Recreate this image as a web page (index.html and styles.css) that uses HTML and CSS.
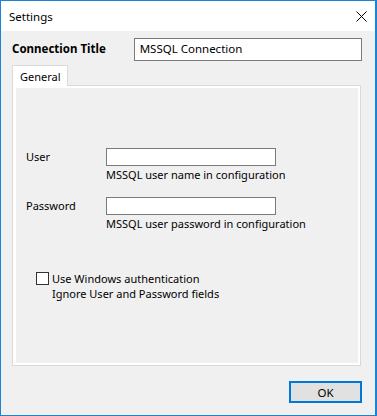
FILE: index.html
```html
<!DOCTYPE html>
<html>
<head>
<meta charset="utf-8">
<link rel="stylesheet" href="styles.css">
</head>
<body>
<div class="window">
  <div class="titlebar">
    <span class="title">Settings</span>
    <span class="close">
      <svg width="11" height="11" viewBox="0 0 11 11"><path d="M0.5 0.5 L10.5 10.5 M10.5 0.5 L0.5 10.5" stroke="#000" stroke-width="1" fill="none"/></svg>
    </span>
  </div>
  <div class="content">
    <div class="conn-row">
      <label class="conn-label">Connection Title</label>
      <div class="textbox conn-input">MSSQL Connection</div>
    </div>
    <div class="tabs">
      <div class="tab">General</div>
    </div>
    <div class="panel">
      <div class="page">
        <div class="fields">
          <div class="field">
            <span class="flabel">User</span>
            <div class="textbox finput"></div>
            <span class="hint">MSSQL user name in configuration</span>
          </div>
          <div class="field">
            <span class="flabel">Password</span>
            <div class="textbox finput"></div>
            <span class="hint">MSSQL user password in configuration</span>
          </div>
        </div>
        <div class="check">
          <span class="box"></span>
          <div class="check-text">
            <div>Use Windows authentication</div>
            <div>Ignore User and Password fields</div>
          </div>
        </div>
      </div>
    </div>
    <div class="footer">
      <button class="ok">OK</button>
    </div>
  </div>
</div>
</body>
</html>
```

FILE: styles.css
```css
* { box-sizing: border-box; }
html, body { margin: 0; padding: 0; }
body {
  font-family: "Noto Sans", "DejaVu Sans", sans-serif;
  font-size: 11px;
  line-height: 15px;
  color: #000;
  background: #fff;
}
.window {
  width: 377px;
  height: 416px;
  border: 1px solid #1883d7;
  border-right-width: 2px;
  display: flex;
  flex-direction: column;
  background: #f0f0f0;
}
.titlebar {
  height: 30px;
  background: #fff;
  display: flex;
  align-items: center;
  justify-content: space-between;
  padding-left: 8px;
  padding-right: 8px;
}
.title { font-size: 11.5px; }
.close { display: flex; width: 11px; height: 11px; }
.content {
  flex: 1;
  padding: 7px 13px 0 11px;
  display: flex;
  flex-direction: column;
}
.conn-row { display: flex; align-items: center; height: 23px; }
.conn-label { width: 122px; font-weight: bold; font-size: 11.5px; margin-top: -2px; }
.textbox {
  background: #fff;
  border: 1px solid #7a7a7a;
}
.conn-input {
  width: 229px;
  height: 23px;
  padding: 2px 5px;
  font-size: 11.5px;
}
.tabs { margin-top: 4px; display: flex; position: relative; z-index: 1; }
.tab {
  width: 56px;
  height: 21px;
  margin-bottom: -1px;
  background: #fff;
  border: 1px solid #d9d9d9;
  border-bottom: none;
  padding: 3px 0 0 7px;
}
.panel {
  width: 349px;
  height: 281px;
  background: #fff;
  border: 1px solid #d9d9d9;
  padding: 2px 2px 2px 3px;
}
.page {
  height: 100%;
  background: #f0f0f0;
  padding: 60px 10px 0 10px;
}
.fields { display: flex; flex-direction: column; gap: 15px; }
.field {
  display: grid;
  grid-template-columns: 80px 170px;
}
.flabel { grid-column: 1; grid-row: 1; padding-top: 1px; }
.finput { grid-column: 2; grid-row: 1; height: 18px; }
.hint { grid-column: 2; grid-row: 2; padding-top: 1px; white-space: nowrap; }
.check {
  margin-top: 40px;
  margin-left: 10px;
  display: flex;
  align-items: flex-start;
  gap: 3px;
}
.check-text { white-space: nowrap; }
.box {
  width: 13px;
  height: 13px;
  border: 1px solid #333;
  background: #fff;
  margin-top: 1px;
  flex: none;
}
.footer {
  margin-top: 15px;
  display: flex;
  justify-content: flex-end;
}
.ok {
  width: 73px;
  height: 22px;
  background: #e1e1e1;
  border: 2px solid #0078d7;
  font-family: inherit;
  font-size: 11.5px;
  color: #000;
  padding: 0;
  margin: 0;
}
```
